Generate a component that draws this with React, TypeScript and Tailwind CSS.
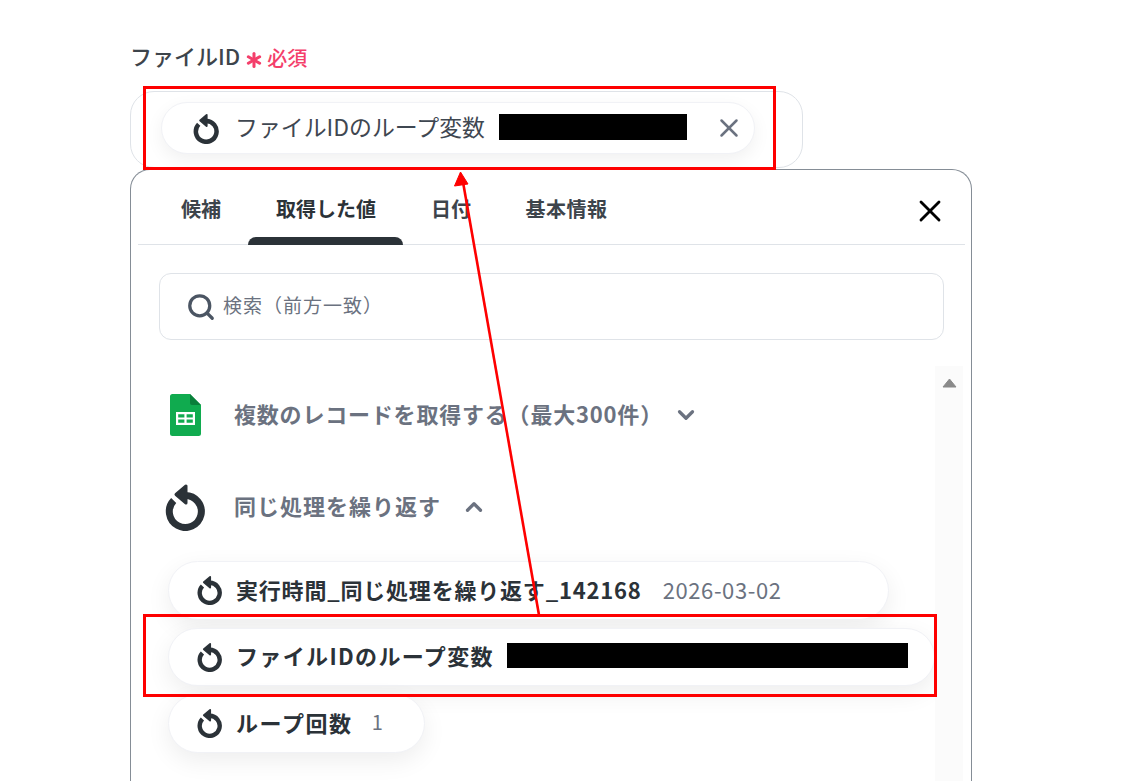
import { Asterisk, ChevronDown, ChevronUp, Search, X } from "lucide-react";

const LoopIcon: React.FC<{ className: string }> = ({ className }) => (
  <svg className={className} viewBox="0 0 40 48" fill="none">
    <path d="M8.7 17.5A16 16 0 1 0 20 12.5" stroke="#2b3238" strokeWidth="7" />
    <path d="M21 3 L21 20 L11 11.5 Z" fill="#2b3238" stroke="#2b3238" strokeWidth="3" strokeLinejoin="round" />
  </svg>
);

const SheetsIcon = () => (
  <svg className="h-[42px] w-[31px]" viewBox="0 0 31 42">
    <path d="M2.5 0H20L31 11V39.5A2.5 2.5 0 0 1 28.5 42H2.5A2.5 2.5 0 0 1 0 39.5V2.5A2.5 2.5 0 0 1 2.5 0Z" fill="#10ab4f" />
    <path d="M20 0L31 11H22A2 2 0 0 1 20 9Z" fill="#0a7f3a" />
    <path d="M6 18H25V31H6ZM8.2 20.2V23.4H14.4V20.2ZM16.6 20.2V23.4H22.8V20.2ZM8.2 25.6V28.8H14.4V25.6ZM16.6 25.6V28.8H22.8V25.6Z" fill="#fff" fillRule="evenodd" />
  </svg>
);

const pillClass =
  "flex h-[58.5px] shrink-0 items-center whitespace-nowrap rounded-full border border-[#f1f2f6] bg-white pl-[28px] shadow-[0_8px_24px_rgba(0,0,0,0.07)]";

const tabClass = "flex h-[74px] shrink-0 items-center justify-center pt-[4px] text-[20px] font-bold";

export default function App() {
  return (
    <div className="relative h-[781px] w-[1132px] overflow-hidden bg-white pl-[130px] pt-[42px] font-['Noto_Sans_CJK_JP',sans-serif] text-[#2b3238]">
      <div className="flex h-[30px] items-center">
        <span className="pb-[4px] text-[22px] font-medium leading-[30px] text-[#3d444b]">ファイルID</span>
        <Asterisk className="ml-[1px] mt-[5px] h-[26px] w-[26px] text-[#f43f6b]" strokeWidth={2.8} />
        <span className="mt-[1px] text-[20px] font-medium leading-[28px] text-[#f43f6b]">必須</span>
      </div>

      <div className="mt-[19px] flex h-[77px] w-[673px] items-start rounded-[24px] border border-[#dfe3e8] pl-[30px] pt-[10px]">
        <div className="flex h-[52px] w-[594px] items-center whitespace-nowrap rounded-full border border-[#f1f2f6] bg-white pl-[31px] shadow-[0_6px_18px_rgba(0,0,0,0.06)]">
          <LoopIcon className="h-[31px] w-[26px]" />
          <span className="ml-[16px] pb-[5px] text-[22.9px] leading-[32px] text-[#3f4751]">ファイルIDのループ変数</span>
          <span className="mb-[2px] ml-[14px] h-[26px] w-[188px] bg-black" />
          <X className="ml-[27px] h-[30px] w-[30px] text-[#6b7280]" strokeWidth={2} />
        </div>
      </div>

      <div className="relative mt-px flex h-[612px] w-[842px] flex-col rounded-t-[20px] border border-b-0 border-[#858d96] bg-white">
        <div className="ml-[7px] mr-[6px] flex h-[75px] shrink-0 items-end border-b border-[#dfe3e8] pl-[15.5px]">
          <div className={`${tabClass} w-[95px] text-[#3d444b]`}>候補</div>
          <div className={`${tabClass} w-[155px] text-[#2b3238]`}>取得した値</div>
          <div className={`${tabClass} w-[95px] text-[#3d444b]`}>日付</div>
          <div className={`${tabClass} w-[136px] tracking-[0.5px] text-[#3d444b]`}>基本情報</div>
          <X className="mb-[15px] ml-[277.5px] h-[36px] w-[36px] shrink-0 text-black" strokeWidth={1.9} />
        </div>
        <span className="absolute left-[117px] top-[67px] h-[8px] w-[155px] rounded-t-[8px] bg-[#2b3238]" />

        <div className="ml-[28px] mt-[28px] flex h-[67px] w-[785px] shrink-0 items-center rounded-[12px] border border-[#dfe3e8] pl-[26px]">
          <Search className="h-[30px] w-[30px] text-[#4b5563]" strokeWidth={2.6} />
          <span className="ml-[7px] pb-[4px] text-[19px] leading-[26px] tracking-[1px] text-[#6b7280]">検索（前方一致）</span>
        </div>

        <div className="mt-[26px] flex min-h-0 flex-1">
          <div className="flex min-w-0 flex-1 flex-col pl-[33px] pt-[24px]">
            <div className="flex h-[50px] items-center whitespace-nowrap">
              <span className="ml-[6px]"><SheetsIcon /></span>
              <span className="ml-[33px] pb-[4px] text-[22px] font-bold leading-[30px] tracking-[0.8px] text-[#6b7280]">複数のレコードを取得する（最大300件）</span>
              <ChevronDown className="ml-[10px] h-[26px] w-[26px] text-[#6b7280]" strokeWidth={3} />
            </div>
            <div className="mt-[42px] flex h-[50px] items-center whitespace-nowrap">
              <LoopIcon className="ml-[1px] h-[48px] w-[40px]" />
              <span className="ml-[29px] pb-[4px] text-[22px] font-bold leading-[30px] tracking-[1px] text-[#6b7280]">同じ処理を繰り返す</span>
              <ChevronUp className="ml-[20px] h-[26px] w-[26px] text-[#6b7280]" strokeWidth={3} />
            </div>
            <div className="ml-[4px] mt-[29px] flex flex-col items-start gap-[8px]">
              <div className={pillClass}>
                <LoopIcon className="h-[30px] w-[25px]" />
                <span className="ml-[14px] pb-[3px] text-[22px] font-bold leading-[30px] tracking-[0.8px]">実行時間_同じ処理を繰り返す_142168</span>
                <span className="ml-[21px] pb-[3px] pr-[106px] text-[22px] leading-[28px] tracking-[0.6px] text-[#6b7280]">2026-03-02</span>
              </div>
              <div className={pillClass}>
                <LoopIcon className="h-[30px] w-[25px]" />
                <span className="ml-[14px] pb-[3px] text-[22px] font-bold leading-[30px] tracking-[1.35px]">ファイルIDのループ変数</span>
                <span className="mb-[2px] ml-[13px] h-[25px] w-[401px] shrink-0 bg-black" />
                <span className="w-[26px] shrink-0" />
              </div>
              <div className={pillClass}>
                <LoopIcon className="h-[30px] w-[25px]" />
                <span className="ml-[14px] pb-[3px] text-[22px] font-bold leading-[30px] tracking-[1.6px]">ループ回数</span>
                <span className="ml-[19px] pb-[3px] pr-[41px] text-[20px] leading-[28px] text-[#6b7280]">1</span>
              </div>
            </div>
          </div>
          <div className="mr-[8px] flex w-[28px] shrink-0 justify-center bg-[#fbfbfb] pt-[12px]">
            <svg className="h-[10px] w-[15px]" viewBox="0 0 15 10">
              <path d="M7.5 1L14 9H1Z" fill="#8a8a8a" stroke="#8a8a8a" strokeLinejoin="round" />
            </svg>
          </div>
        </div>
      </div>

      {/* annotation overlay */}
      <div className="absolute left-[143px] top-[86px] h-[84px] w-[633px] border-[3px] border-[#fe0000]" />
      <div className="absolute left-[143px] top-[614px] h-[83px] w-[794px] border-[3px] border-[#fe0000]" />
      <svg className="absolute left-0 top-0 h-[781px] w-[1132px]" viewBox="0 0 1132 781" fill="none">
        <path d="M539 615L463 182" stroke="#fe0000" strokeWidth="2.6" />
        <path d="M460.5 172L454.5 186L468 184Z" fill="#fe0000" stroke="#fe0000" />
      </svg>
    </div>
  );
}
